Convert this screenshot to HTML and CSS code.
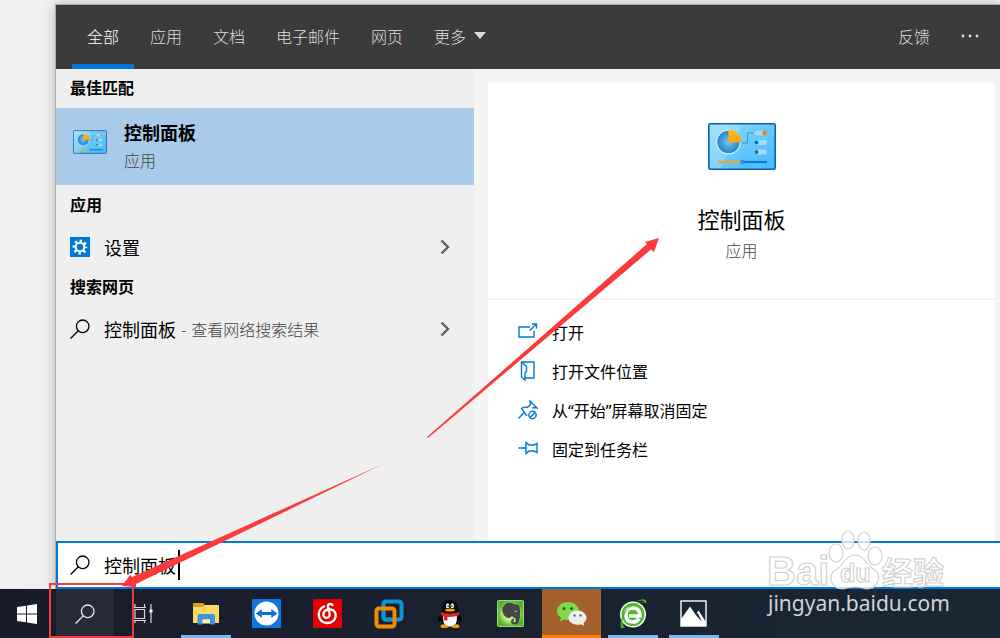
FILE: index.html
```html
<!DOCTYPE html>
<html lang="zh-CN">
<head>
  <meta charset="UTF-8">
  <meta name="viewport" content="width=device-width, initial-scale=1.0">
  <title>搜索 - 控制面板</title>
  <link rel="stylesheet" href="styles.css">
</head>
<body>

  <!-- shared icons -->
  <svg class="defs" width="0" height="0" aria-hidden="true">
    <defs>
      <linearGradient id="cpBg" x1="0" y1="0" x2="1" y2="1">
        <stop offset="0" stop-color="#8fdcfb"/>
        <stop offset="1" stop-color="#41b8fb"/>
      </linearGradient>
      <radialGradient id="cpPie">
        <stop offset="0" stop-color="#7cc4ea"/>
        <stop offset="1" stop-color="#1683cc"/>
      </radialGradient>
      <linearGradient id="cpSlice" x1="0" y1="0" x2="1" y2="1">
        <stop offset="0" stop-color="#ffc010"/>
        <stop offset="1" stop-color="#fd9c12"/>
      </linearGradient>
    </defs>
    <symbol id="control-panel" viewBox="0 0 68 47">
      <rect x="0.8" y="0.8" width="66.4" height="45.4" rx="1.5" fill="url(#cpBg)" stroke="#0f659e" stroke-width="1.6"/>
      <path d="M2 2h32L13 45H2z" fill="#fff" opacity=".18"/>
      <circle cx="20.5" cy="19" r="11.8" fill="url(#cpPie)" stroke="#d8effb" stroke-width="1.2"/>
      <path d="M20.500 19.500V6.500a13 13 0 0 1 13 13z" fill="url(#cpSlice)"/>
      <path d="M34 20h5.500V10H46" fill="none" stroke="#2b95d4" stroke-width="1"/>
      <g fill="#a0dcfc" stroke="#5cb8ec" stroke-width=".7">
        <rect x="45.500" y="7" width="14" height="6" rx="3"/>
        <rect x="45.500" y="16.500" width="14" height="6" rx="3"/>
        <rect x="45.500" y="26" width="14" height="6" rx="3"/>
      </g>
      <circle cx="56.500" cy="10" r="2.200" fill="#f5780c"/>
      <circle cx="48.500" cy="19.500" r="2" fill="#0b6fb8"/>
      <circle cx="48.500" cy="29" r="2" fill="#0b6fb8"/>
      <path d="M10 39h24" stroke="#fba31b" stroke-width="2.200"/>
      <path d="M35 39h24" stroke="#0b7bd6" stroke-width="2.200"/>
      <circle cx="34.500" cy="39" r="2.300" fill="#1795ef"/>
    </symbol>
    <symbol id="search" viewBox="0 0 20 20">
      <circle cx="12.700" cy="7.300" r="6.300" fill="none" stroke="currentColor" stroke-width="1.300"/>
      <path d="M8.300 11.800L.6 19.500" fill="none" stroke="currentColor" stroke-width="1.300"/>
    </symbol>
    <symbol id="chevron" viewBox="0 0 10 16">
      <path d="M1.500 1.500L8 8l-6.500 6.500" fill="none" stroke="currentColor" stroke-width="2.400"/>
    </symbol>
  </svg>

  <main class="desktop">
    <div class="panel">
      <header class="tabs">
        <nav>
          <button class="tab active">全部</button>
          <button class="tab">应用</button>
          <button class="tab">文档</button>
          <button class="tab">电子邮件</button>
          <button class="tab">网页</button>
          <button class="tab more">更多
            <svg width="12" height="7" viewBox="0 0 12 7"><path d="M0 0h12L6 7z" fill="currentColor"/></svg>
          </button>
        </nav>
        <button class="tab feedback">反馈</button>
        <button class="dots" aria-label="选项">
          <svg width="20" height="4" viewBox="0 0 20 4" fill="currentColor"><circle cx="3" cy="2" r="1.400"/><circle cx="10" cy="2" r="1.400"/><circle cx="17" cy="2" r="1.400"/></svg>
        </button>
      </header>

      <div class="content">
        <section class="results">
          <h2>最佳匹配</h2>
          <button class="best">
            <svg width="34" height="24"><use href="#control-panel"/></svg>
            <span class="best-text">
              <strong>控制面板</strong>
              <small>应用</small>
            </span>
          </button>

          <h2>应用</h2>
          <button class="row">
            <svg width="20" height="20" viewBox="0 0 20 20">
              <rect width="20" height="20" fill="#0078d7"/>
              <circle cx="10" cy="10" r="4.300" fill="none" stroke="#fff" stroke-width="2"/>
              <circle cx="10" cy="10" r="6.200" fill="none" stroke="#fff" stroke-width="2.400" stroke-dasharray="2.400 2.470" stroke-dashoffset="1.200"/>
            </svg>
            <span>设置</span>
            <svg class="chevron" width="10" height="16"><use href="#chevron"/></svg>
          </button>

          <h2>搜索网页</h2>
          <button class="row">
            <svg width="20" height="20"><use href="#search"/></svg>
            <span class="web">控制面板 <small>-</small> <small>查看网络搜索结果</small></span>
            <svg class="chevron" width="10" height="16"><use href="#chevron"/></svg>
          </button>
        </section>

        <section class="preview">
          <div class="hero">
            <svg width="68" height="47"><use href="#control-panel"/></svg>
            <h1>控制面板</h1>
            <p>应用</p>
          </div>
          <ul class="actions">
            <li><button>
              <svg width="20" height="20" viewBox="0 0 20 20"><path d="M12 5H1v10h15V9M11.500 8.500l6.500-6M14 2h4.500v4.500" /></svg>
              打开
            </button></li>
            <li><button>
              <svg width="20" height="20" viewBox="0 0 20 20"><path d="M6.500 17H16V1H3.500M3.500 1v15l3.500 3v-7l1.500-1.500V5.500z"/></svg>
              打开文件位置
            </button></li>
            <li><button>
              <svg width="20" height="20" viewBox="0 0 20 20"><path d="M9 16L3.500 8.500Q6.500 6.500 9.500 7.500L12.500 4.500 12 1l7 7-3.500-.5-1 1M6 12.500l-5.500 6"/><circle cx="14.500" cy="15" r="3.700"/><path d="M12 17.500l5-5"/></svg>
              从“开始”屏幕取消固定
            </button></li>
            <li><button>
              <svg width="20" height="20" viewBox="0 0 20 20"><path d="M.5 9H8M8 3.500v11l3-2.500h5l3 1.500v-9L16 6h-5z"/></svg>
              固定到任务栏
            </button></li>
          </ul>
        </section>
      </div>

      <div class="searchbox">
        <svg width="20" height="20"><use href="#search"/></svg>
        <input type="text" value="控制面板" aria-label="搜索">
        <span class="caret"></span>
      </div>
    </div>
  </main>

  <footer class="taskbar">
    <button class="task start" aria-label="开始">
      <svg width="20" height="20" viewBox="0 0 20 20" fill="#fff"><path d="M0 3l9-1.300v7.800H0zM10 1.500L20 0v9.500H10zM0 10.500h9v7.800L0 17zM10 10.500h10V20l-10-1.500z"/></svg>
    </button>
    <button class="task find" aria-label="搜索">
      <svg width="20" height="20"><use href="#search"/></svg>
    </button>
    <button class="task view" aria-label="任务视图">
      <svg width="20" height="20" viewBox="0 0 20 20" fill="none" stroke="#d5d6da" stroke-width="1.200"><path d="M0 3.500h13M0 16.500h13M2 5.500h9.500v9H2zM2 0v3.500M11.500 0v3.500M2 16.500V19M11.500 16.500V19M18 0v19"/><rect x="16.500" y="5.500" width="3" height="3" fill="#fff" stroke="none"/></svg>
    </button>
    <button class="task open" aria-label="文件资源管理器">
      <svg width="26" height="22" viewBox="0 0 26 22"><path d="M0 1q0-1 1-1h9l2 2h13q1 0 1 1v3H0z" fill="#dda010"/><path d="M0 4h10l2-2h13q1 0 1 1v17H0z" fill="#ffd965"/><path d="M4.500 21.500v-8.500q0-2 2-2h13.500q2 0 2 2v8.500h-5v-5h-7.500v5z" fill="#3a97dc"/><path d="M9.500 16.500h7.500v4H9.500z" fill="#fff0b5"/></svg>
    </button>
    <button class="task" aria-label="TeamViewer">
      <svg width="29" height="29" viewBox="0 0 29 29"><rect width="29" height="29" rx="1" fill="#0e77dc"/><circle cx="14.500" cy="14.500" r="12" fill="#fff"/><path d="M3.800 14.500l6-4.500v3h9.500v-3l6 4.500-6 4.500v-3H9.800v3z" fill="#0e70cf"/></svg>
    </button>
    <button class="task" aria-label="网易云音乐">
      <svg width="29" height="29" viewBox="0 0 29 29"><rect width="29" height="29" fill="#e20000"/><g fill="none" stroke="#fff" stroke-width="2.400" stroke-linecap="round"><path d="M11 7.500C3 11 4.500 23.500 14 24c10 .3 12-13 3-13.500-7.500-.2-8 7-4.500 8.200 3.300.8 4.800-2 4-4.700L15 8c-.6-2.800 2.500-4 4.500-2"/></g></svg>
    </button>
    <button class="task" aria-label="VMware">
      <svg width="30" height="30" viewBox="0 0 30 30" fill="none" stroke-width="4"><rect x="9.500" y="2.500" width="18" height="18" rx="2.500" stroke="#0b95d3"/><rect x="2.500" y="9.500" width="18" height="18" rx="2.500" stroke="#f38b00"/><path d="M9.500 13v5q0 2.500 2.500 2.500h5" stroke="#0b95d3"/></svg>
    </button>
    <button class="task" aria-label="QQ">
      <svg width="24" height="28" viewBox="0 0 24 28"><path d="M4 12Q-1 18 .5 22q2 0 3-3h17q1 3 3 3 1.500-4-3.500-10z" fill="#050505"/><path d="M3.500 12Q3.500 0 12 0t8.500 12q2 15-8.500 15T3.500 12z" fill="#080808"/><path d="M5.500 14h13q2 12.500-6.500 12.500T5.500 14z" fill="#fff"/><ellipse cx="9.700" cy="5.700" rx="1.700" ry="2.500" fill="#fff"/><ellipse cx="14.300" cy="5.700" rx="1.700" ry="2.500" fill="#fff"/><circle cx="10.200" cy="6" r=".8"/><circle cx="13.800" cy="6" r=".8"/><ellipse cx="12" cy="10" rx="5" ry="1.600" fill="#f5a10a"/><path d="M3.200 12q8.800 3.500 17.600 0l.7 3q-6 2.500-12 2v3.500H6v-4l-3.500-1.500z" fill="#e5202b"/><path d="M2.500 26q1-2.500 4-1.500l5 1.800q-2 2-6 1.700-3 0-3-2zM21.500 26q-1-2.500-4-1.500l-5 1.800q2 2 6 1.700 3 0 3-2z" fill="#f5a10a"/></svg>
    </button>
    <button class="task" aria-label="印象笔记">
      <svg width="27" height="27" viewBox="0 0 27 27"><defs><radialGradient id="ever"><stop offset="0" stop-color="#e4fcc4"/><stop offset=".6" stop-color="#b5ea80"/><stop offset="1" stop-color="#56b22c"/></radialGradient></defs><rect x=".5" y=".5" width="26" height="26" rx="1" fill="url(#ever)" stroke="#9ade70"/><path d="M5 9l5-6q5-1 6.500 1 6 0 6 2.500 1.500 8-.5 15-.8 3-4.500 3-3.500 0-3.500-3 0-2.500 3-3v2q-1.200.3-1 1.200.3.800 1.500.8 1.500 0 1.500-2.500-.3-2.300-2.500-2.500l-1.500-1.500q-1.500 2.500-4 2-5-1-6-9z" fill="#454644"/><path d="M5 8l4-4.500V8z" fill="#454644"/><path d="M17.500 11q2-1 3 1-1.500-.5-3 0z" fill="#a9df80"/></svg>
    </button>
    <button class="task wechat" aria-label="微信">
      <svg width="30" height="24" viewBox="0 0 30 24"><path d="M11 0c6 0 11 4 11 9s-5 9-11 9q-2 0-4-.6L3 19.500l1-3.800Q0 13 0 9c0-5 5-9 11-9z" fill="#7fd84a"/><circle cx="7" cy="6.500" r="1.500" fill="#195f16"/><circle cx="14.500" cy="6.500" r="1.500" fill="#195f16"/><path d="M20.500 8.500c5 0 9 3.300 9 7.300q0 3.200-3 5.200l.7 2.700-3.300-1.500q-1.700.5-3.400.5c-5 0-9-3-9-7s4-7.200 9-7.200z" fill="#eceeed"/><circle cx="17.500" cy="13.500" r="1.200" fill="#686b68"/><circle cx="23.500" cy="13.500" r="1.200" fill="#686b68"/></svg>
    </button>
    <button class="task open" aria-label="浏览器">
      <svg width="28" height="30" viewBox="0 0 28 30"><circle cx="14" cy="15.500" r="13" fill="#fff"/><circle cx="14" cy="15.500" r="11.500" fill="#51b82b"/><path d="M20 19.500q-2 3.500-6 3.500-7 0-7-7t7-7q7 0 7 8H10" fill="none" stroke="#fff" stroke-width="3.600"/><path d="M2 29.500Q0 20 7 11.500T25.500 3q-2-3-9 0 7-4.500 10.500-1.500 1 1 0 3-1-1.500-5-1Q12 5.500 7.500 12T3.500 23.500Q4 27 6 28.500z" fill="#43ae21"/></svg>
    </button>
    <button class="task open" aria-label="照片">
      <svg width="27" height="27" viewBox="0 0 27 27"><rect x="1" y="1" width="25" height="25" fill="#1b2433" stroke="#fff" stroke-width="1.400"/><path d="M1 19L10 6.500l5.500 8 3-4L26 22v4H1z" fill="#fff"/><path d="M15 14l7 8-4-8.500-1-.500z" fill="#1b2433"/></svg>
    </button>
  </footer>

  <!-- red marks over the screen -->
  <svg class="marks" width="1000" height="638" viewBox="0 0 1000 638" aria-hidden="true">
    <g fill="#fb3b3b">
      <path d="M427 437L647 244l-2-2 14-4-5 14-3-2.500L428 438z"/>
      <path d="M383 464L132 577l-2-2-8 11 14 1v-3z"/>
    </g>
    <rect x="50" y="584" width="83" height="53" fill="none" stroke="#f8393c" stroke-width="2"/>
  </svg>

  <!-- watermark -->
  <svg class="watermark" width="190" height="92" viewBox="0 0 190 92" aria-hidden="true">
    <g class="outline">
      <text class="bai" x="5" y="55">Bai</text>
      <path d="M93 25q7 0 12 8 4 5 9 8 4 4 2 10-3 8-12 8-5-2-11-2t-12 2q-9 0-12-8-1-6 3-10 6-3 9-8 5-8 12-8z"/>
      <ellipse cx="74" cy="23" rx="7" ry="9"/>
      <ellipse cx="86" cy="10" rx="6" ry="9"/>
      <ellipse cx="102" cy="11" rx="6" ry="9"/>
      <ellipse cx="113" cy="26" rx="7" ry="9"/>
      <text class="du" x="78" y="52">du</text>
      <text class="jing" x="120" y="54">经验</text>
    </g>
    <text class="site" x="6" y="81">jingyan.baidu.com</text>
  </svg>

</body>
</html>
```

FILE: styles.css
```css
* {
  box-sizing: border-box;
}

body {
  margin: 0;
  min-height: 100vh;
  display: flex;
  flex-direction: column;
  position: relative;
  overflow: hidden;
  background-color: #f1f1f1;
  color: #000;
  font-family: "Noto Sans CJK SC", "Liberation Sans", sans-serif;
  font-size: 16px;
  line-height: 24px;
}

button {
  border: none;
  padding: 0;
  background: none;
  color: inherit;
  font: inherit;
  text-align: left;
  cursor: pointer;
}

svg {
  flex: none;
  display: block;
}

.defs {
  position: absolute;
}

.desktop {
  flex: 1;
  display: flex;
  padding: 5px 0 0 56px;
}

.panel {
  flex: 1;
  display: flex;
  flex-direction: column;
  box-shadow: 0 0 0 1px #aaa, 0 0 12px rgba(0, 0, 0, 0.3);
}

/* top tabs */
.tabs {
  height: 64px;
  display: flex;
  padding: 0 20px 0 16px;
  background-color: #3b3b3b;
  color: #dedede;
  font-weight: 300;
}

.tabs nav {
  flex: 1;
  display: flex;
  gap: 1px;
}

.tab,
.dots {
  padding: 0 15px;
  border-top: 2px solid transparent;
  border-bottom: 5px solid transparent;
}

.tab.active {
  border-bottom-color: #0078d7;
  color: #fff;
}

.more {
  display: flex;
  align-items: center;
  gap: 8px;
}

.dots {
  padding-right: 0;
}

/* results */
.content {
  flex: 1;
  display: flex;
}

.results {
  flex: 0 0 418px;
  background-color: #efefef;
}

.results h2 {
  margin: 0;
  padding: 6px 14px 9px;
  font-size: 16px;
  line-height: 24px;
  font-weight: 700;
}

.best,
.row {
  width: 100%;
  display: flex;
  align-items: center;
}

.best {
  height: 77px;
  margin-bottom: 1px;
  padding: 0 17px 2px;
  gap: 17px;
  background-color: #a9cbe9;
}

.best svg {
  margin-bottom: 8px;
}

.best-text {
  display: flex;
  flex-direction: column;
  gap: 4px;
}

.best-text strong,
.row {
  font-size: 18px;
}

small {
  font-size: 16px;
  font-weight: 300;
  color: #444;
}

.row {
  height: 43px;
  padding: 0 24px 0 14px;
  gap: 14px;
}

.web {
  display: flex;
  gap: 5px;
}

.row .chevron {
  margin-left: auto;
  color: #606060;
}

/* preview */
.preview {
  flex: 1;
  display: flex;
  flex-direction: column;
  padding: 14px 5px 0 14px;
  background-color: #f4f4f4;
}

.hero {
  height: 215px;
  display: flex;
  flex-direction: column;
  align-items: center;
  padding-top: 40px;
  margin-bottom: 2px;
  background-color: #fff;
}

.hero h1 {
  margin: 32px 0 4px;
  font-size: 22px;
  line-height: 32px;
  font-weight: 400;
}

.hero p {
  margin: 0;
  font-weight: 300;
  color: #444;
}

.actions {
  flex: 1;
  margin: 0;
  padding: 13px 30px;
  list-style: none;
  background-color: #fff;
}

.actions button {
  height: 39px;
  width: 100%;
  display: flex;
  align-items: center;
  gap: 14px;
  font-family: "Noto Sans", "Noto Sans CJK SC", sans-serif;
}

.actions svg {
  fill: none;
  stroke: #0078d7;
  stroke-width: 1.4;
  margin-bottom: 2px;
}

/* search box */
.searchbox {
  height: 48px;
  display: flex;
  align-items: center;
  padding: 0 12px;
  border: 2px solid #0078d7;
  border-right: none;
  background-color: #fff;
}

.searchbox input {
  width: 74px;
  margin-left: 14px;
  padding: 0;
  border: none;
  outline: none;
  font: inherit;
  font-size: 18px;
}

.caret {
  width: 2px;
  height: 30px;
  background-color: #000;
}

/* taskbar */
.taskbar {
  height: 49px;
  display: flex;
  gap: 2px;
  background: linear-gradient(to right, #1a1b2a, #192735);
}

.task {
  width: 59px;
  display: flex;
  align-items: center;
  justify-content: center;
  border-top: 3px solid transparent;
  border-bottom: 3px solid transparent;
}

.start {
  width: 54px;
}

.find,
.view {
  width: 58px;
}

.find {
  background-color: #272a38;
  border-color: #272a38;
  color: #e6e6e9;
}

.view {
  padding-right: 4px;
}

.open {
  background: linear-gradient(#76b9ed, #76b9ed) center bottom / 50px 3px no-repeat border-box;
}

.wechat {
  background-color: #a3612e;
  border-top-color: #a3612e;
  border-bottom-color: #ff7800;
}

/* overlays */
.marks {
  position: absolute;
  left: 0;
  top: 0;
  pointer-events: none;
}

.watermark {
  position: absolute;
  right: 48px;
  bottom: 16px;
  pointer-events: none;
}

.outline {
  fill: rgba(255, 255, 255, 0.75);
  stroke: #d2d2d2;
  stroke-width: 1.2;
  font-family: "Liberation Sans", sans-serif;
  font-weight: 700;
}

.bai {
  font-size: 40px;
}

.du {
  font-size: 25px;
}

.jing {
  font-family: "Noto Sans CJK SC", sans-serif;
  font-size: 31px;
}

.site {
  fill: #d0d3d7;
  font-family: "Noto Sans", sans-serif;
  font-size: 21px;
}
```
